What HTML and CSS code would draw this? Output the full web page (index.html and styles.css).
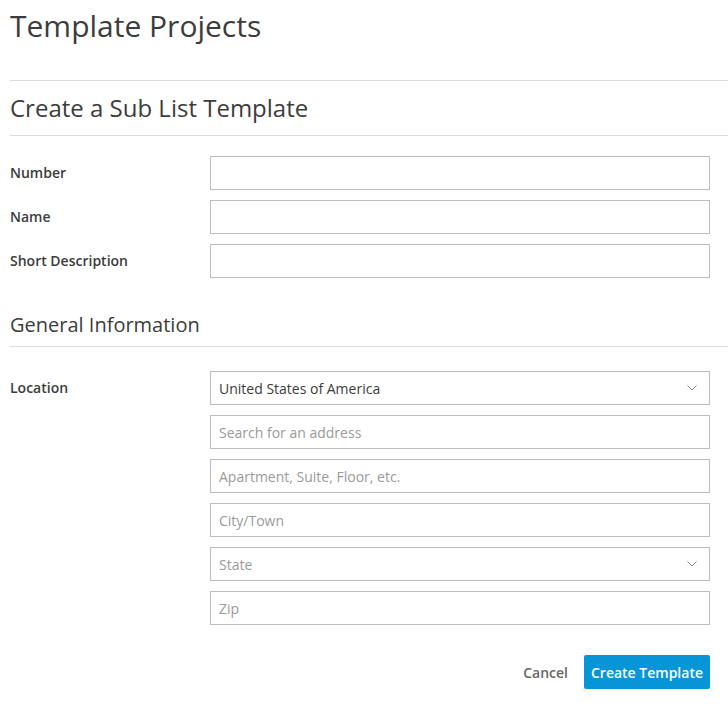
FILE: index.html
```html
<!DOCTYPE html>
<html lang="en">
<head>
<meta charset="utf-8">
<title>Template Projects</title>
<link rel="stylesheet" href="styles.css">
</head>
<body>
<div class="page">
  <h1 class="page-title">Template Projects</h1>
  <h2 class="section-title">Create a Sub List Template</h2>
  <form class="form">
    <div class="row">
      <label class="label">Number</label>
      <div class="fields"><div class="input"></div></div>
    </div>
    <div class="row">
      <label class="label">Name</label>
      <div class="fields"><div class="input"></div></div>
    </div>
    <div class="row">
      <label class="label">Short Description</label>
      <div class="fields"><div class="input"></div></div>
    </div>

    <h3 class="group-title">General Information</h3>

    <div class="row row-location">
      <label class="label">Location</label>
      <div class="fields">
        <div class="input select"><span class="value">United States of America</span>
          <svg class="chev" width="10" height="6" viewBox="0 0 10 6"><path d="M0.5 0.5 L5 5 L9.5 0.5" fill="none" stroke="#8a8a8a" stroke-width="1"/></svg>
        </div>
        <div class="input"><span class="ph">Search for an address</span></div>
        <div class="input"><span class="ph">Apartment, Suite, Floor, etc.</span></div>
        <div class="input"><span class="ph">City/Town</span></div>
        <div class="input select"><span class="ph">State</span>
          <svg class="chev" width="10" height="6" viewBox="0 0 10 6"><path d="M0.5 0.5 L5 5 L9.5 0.5" fill="none" stroke="#8a8a8a" stroke-width="1"/></svg>
        </div>
        <div class="input"><span class="ph">Zip</span></div>
      </div>
    </div>

    <div class="actions">
      <button type="button" class="btn btn-cancel">Cancel</button>
      <button type="button" class="btn btn-primary">Create Template</button>
    </div>
  </form>
</div>
</body>
</html>
```
FILE: styles.css
```css
* { box-sizing: border-box; }
html, body { margin: 0; padding: 0; background: #fff; }
body {
  font-family: "Open Sans", "Noto Sans", sans-serif;
  color: #3c3c3c;
}
.page {
  width: 728px;
  padding-left: 10px;
}
.page-title {
  margin: 0;
  font-size: 30px;
  font-weight: 400;
  line-height: 40px;
  padding-top: 6px;
  height: 81px;
  border-bottom: 1px solid #dcdcdc;
  color: #3c3c3c;
}
.section-title {
  margin: 0;
  font-size: 24px;
  font-weight: 400;
  line-height: 32px;
  padding-top: 11px;
  height: 55px;
  border-bottom: 1px solid #dcdcdc;
  color: #3c3c3c;
}
.form {
  padding-right: 18px;
  padding-top: 20px;
}
.row {
  display: flex;
  align-items: flex-start;
  margin-bottom: 10px;
}
.label {
  width: 200px;
  flex: none;
  height: 32px;
  display: flex;
  align-items: center;
  font-size: 14px;
  font-weight: 600;
  color: #3c3c3c;
}
.fields {
  flex: 1;
  display: flex;
  flex-direction: column;
  gap: 10px;
}
.input {
  height: 34px;
  border: 1px solid #bdbdbd;
  display: flex;
  align-items: center;
  padding: 0 8px;
  font-size: 14px;
}
.value { color: #3c3c3c; }
.ph { color: #9a9a9a; }
.select { justify-content: space-between; padding-right: 12px; }
.chev { display: block; }
.group-title {
  margin: 31px -18px 24px 0;
  font-size: 20px;
  font-weight: 400;
  line-height: 28px;
  padding-top: 2px;
  height: 38px;
  border-bottom: 1px solid #dcdcdc;
  color: #3c3c3c;
}
.row-location { margin-bottom: 0; }
.actions {
  display: flex;
  justify-content: flex-end;
  margin-top: 30px;
}
.btn {
  height: 34px;
  border: none;
  border-radius: 2px;
  padding: 0 7px;
  font-family: inherit;
  font-size: 14px;
  font-weight: 600;
  background: none;
  cursor: pointer;
}
.btn-cancel { color: #666; margin-right: 9px; }
.btn-primary { background: #0696d7; color: #fff; }
```
